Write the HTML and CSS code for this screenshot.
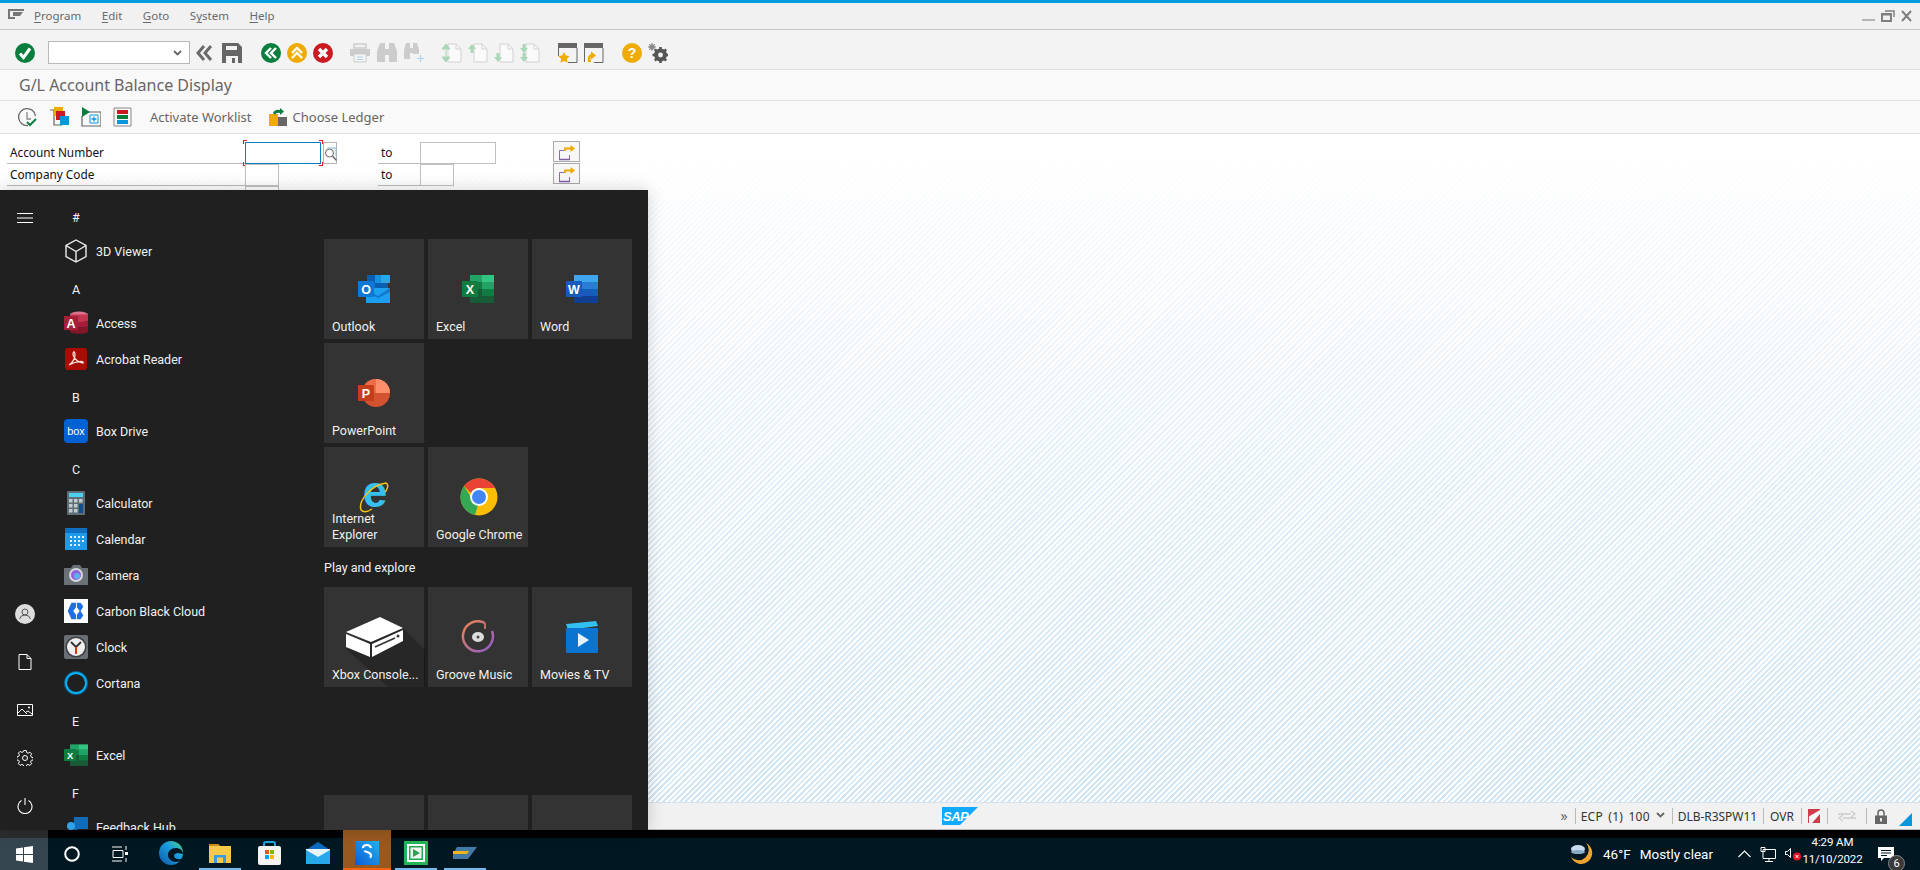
FILE: index.html
```html
<!DOCTYPE html>
<html lang="en">
<head>
<meta charset="utf-8">
<title>G/L Account Balance Display</title>
<link rel="stylesheet" href="styles.css">
</head>
<body>
<svg class="defs" width="0" height="0" aria-hidden="true">
  <defs>
    <symbol id="excel" viewBox="0 0 32 28">
      <rect x="8" y="0" width="24" height="28" rx="1" fill="#107c41"/>
      <rect x="20" y="0" width="12" height="7" fill="#33c481"/>
      <rect x="8" y="0" width="12" height="7" fill="#21a366"/>
      <rect x="20" y="7" width="12" height="7" fill="#21a366"/>
      <rect x="20" y="14" width="12" height="7" fill="#107c41"/>
      <rect x="8" y="14" width="12" height="7" fill="#185c37"/>
      <rect x="8" y="21" width="24" height="7" fill="#185c37"/>
      <rect x="0" y="6" width="16" height="16" rx="1" fill="#107c41"/>
      <text x="8" y="19" class="svg-letter">X</text>
    </symbol>
    <symbol id="pageup" viewBox="0 0 20 20">
      <path d="M6 1h8l5 5v13H6z" fill="#fafafa" stroke="#d2d2d2"/>
      <path d="M14 1v5h5" fill="none" stroke="#d2d2d2"/>
    </symbol>
    <symbol id="sapgoto" viewBox="0 0 18 18">
      <path d="M8 7.500H1.500v9h10V12" fill="none" stroke="#8b6bb1"/>
      <path d="M1 16.500h11" stroke="#7d5da8" stroke-width="1.500"/>
      <path d="M6 8V4.500h6.500V2L17 5.500 12.500 9V6.500H8V8z" fill="#f0ab00"/>
    </symbol>
  </defs>
</svg>
<div class="desktop">
  <main class="window">
    <div class="menubar">
      <svg class="menu-glyph" width="16" height="10" viewBox="0 0 16 10"><path d="M0 0h16v2H2v6h5v2H0z M5 3h10l-3 4H5z" fill="#777"/></svg>
      <nav class="menu-items">
        <span><u>P</u>rogram</span><span><u>E</u>dit</span><span><u>G</u>oto</span><span>S<u>y</u>stem</span><span><u>H</u>elp</span>
      </nav>
      <div class="win-controls">
        <svg width="13" height="12" viewBox="0 0 13 12"><rect x="0" y="9" width="13" height="2" fill="#b4b4b4"/></svg>
        <svg width="14" height="12" viewBox="0 0 14 12"><path d="M1 4h9v7H1z M1 4.500h9" fill="none" stroke="#808080" stroke-width="2"/><path d="M4 1h9v6" fill="none" stroke="#808080" stroke-width="1.500"/></svg>
        <svg width="11" height="12" viewBox="0 0 11 12"><path d="M1 1l9 10M10 1l-9 10" stroke="#808080" stroke-width="2"/></svg>
      </div>
    </div>

    <div class="toolbar">
      <div class="tb-group">
        <svg class="ic" viewBox="0 0 20 20"><circle cx="10" cy="10" r="10" fill="#0a7e3e"/><path d="M5 10.500l3.500 4L15 5.500" fill="none" stroke="#fff" stroke-width="3"/></svg>
      </div>
      <div class="combo">
        <svg width="9" height="6" viewBox="0 0 9 6"><path d="M1 1l3.500 3.500L8 1" fill="none" stroke="#666" stroke-width="1.800"/></svg>
      </div>
      <div class="tb-group nav-save">
        <svg class="ic narrow" viewBox="0 0 18 20"><path d="M9 3L3 10l6 7M16 3l-6 7 6 7" fill="none" stroke="#6b6b6b" stroke-width="3"/></svg>
        <svg class="ic" viewBox="0 0 20 20"><path d="M0 0h16l4 4v16H0z" fill="#666"/><rect x="4" y="3" width="11" height="4" fill="#f3f3f3"/><rect x="4" y="13" width="12" height="7" fill="#f3f3f3"/><rect x="10" y="15" width="3" height="5" fill="#666"/></svg>
      </div>
      <div class="tb-group wide">
        <svg class="ic" viewBox="0 0 20 20"><circle cx="10" cy="10" r="10" fill="#0a7e3e"/><path d="M10 5l-5 5 5 5M15 5l-5 5 5 5" fill="none" stroke="#fff" stroke-width="2.400"/></svg>
        <svg class="ic" viewBox="0 0 20 20"><circle cx="10" cy="10" r="10" fill="#f0ab00"/><path d="M5 10l5-5 5 5M5 15l5-5 5 5" fill="none" stroke="#fff" stroke-width="2.400"/></svg>
        <svg class="ic" viewBox="0 0 20 20"><circle cx="10" cy="10" r="10" fill="#cc1a22"/><path d="M6 6l8 8M14 6l-8 8" stroke="#fff" stroke-width="3.400"/></svg>
      </div>
      <div class="tb-group std">
        <svg class="ic" viewBox="0 0 20 20"><path d="M4 1h12v4H4z" fill="none" stroke="#ccc" stroke-width="1.500"/><path d="M0 6h20v7h-4v-2H4v2H0z" fill="#ccc"/><path d="M4 11h12v8H4z" fill="#f5f5f5" stroke="#ccc"/><path d="M7 14h6M7 16.500h6" stroke="#a9d5ec"/></svg>
        <svg class="ic" viewBox="0 0 20 20"><path d="M3 0h5v19H0V8zM12 0h5l3 8v11h-8z M8 6h4v6H8z" fill="#ccc"/></svg>
        <svg class="ic" viewBox="0 0 20 20"><path d="M2 0h4v16H0V7zM9 0h4l2 7v4H9z M6 5h3v5H6z" fill="#ccc"/><path d="M13 15.500h7M16.500 12v7" stroke="#a9d5ec" stroke-width="1.200"/></svg>
      </div>
      <div class="tb-group pages">
        <svg class="ic" viewBox="0 0 20 20"><use href="#pageup"/><path d="M4 1l4 5H0zM4 7v4M4 19l-4-5h8zM4 14v-3" fill="#a9d8b8" stroke="#a9d8b8" stroke-width="1"/></svg>
        <svg class="ic" viewBox="0 0 20 20"><use href="#pageup"/><path d="M4 1l4 5H0z M2.500 5h3v5h-3z" fill="#a9d8b8"/></svg>
        <svg class="ic" viewBox="0 0 20 20"><use href="#pageup"/><path d="M4 19l-4-5h8z M2.500 10h3v5h-3z" fill="#a9d8b8"/></svg>
        <svg class="ic" viewBox="0 0 20 20"><use href="#pageup"/><path d="M4 10L0 5h8zM2.500 1h3v5h-3zM4 19l-4-5h8zM2.500 10h3v5h-3z" fill="#a9d8b8"/></svg>
      </div>
      <div class="tb-group pages">
        <svg class="ic" viewBox="0 0 20 20"><path d="M0 0h19v5H0z" fill="#666"/><path d="M.5 5v8M19 5v14.500h-9" fill="none" stroke="#666"/><path d="M6 9l1.800 3.600 4 .5-3 2.700.8 4L6 18l-3.600 1.800.8-4-3-2.700 4-.5z" fill="#f0ab00"/></svg>
        <svg class="ic" viewBox="0 0 20 20"><path d="M0 0h19v5H0z" fill="#666"/><path d="M.5 5v14M19 5v14.500h-9" fill="none" stroke="#666"/><path d="M4 19q-1-7 3-8V8.500l5 4-5 4V14q-1 1 0 5z" fill="#f0ab00"/></svg>
      </div>
      <div class="tb-group pages">
        <svg class="ic" viewBox="0 0 20 20"><circle cx="10" cy="10" r="10" fill="#f0ab00"/><text x="10" y="15" class="svg-help">?</text></svg>
        <svg class="ic" viewBox="0 0 20 20"><circle cx="12.500" cy="12" r="5" fill="none" stroke="#555" stroke-width="3"/><path d="M12.500 4v16M4.500 12h16M6.800 6.300l11.400 11.400M18.200 6.300L6.800 17.700" stroke="#555" stroke-width="2.600"/><circle cx="12.500" cy="12" r="2.400" fill="#f3f3f3"/><circle cx="4" cy="4" r="2" fill="none" stroke="#888" stroke-width="1.500"/><path d="M4 0v8M0 4h8M1.200 1.200l5.600 5.600M6.800 1.200L1.200 6.800" stroke="#888"/></svg>
      </div>
    </div>

    <h1 class="titlebar">G/L Account Balance Display</h1>

    <div class="apptools">
      <svg class="ic" viewBox="0 0 20 20"><path d="M11 18.500A8.500 8.500 0 1 1 18.500 9" fill="none" stroke="#666" stroke-width="1.300"/><path d="M10 5v7h4" fill="none" stroke="#888" stroke-width="1.300"/><path d="M10 15l3 3 6-6" fill="none" stroke="#0a7e3e" stroke-width="2"/></svg>
      <svg class="ic" viewBox="0 0 20 20"><path d="M1 3h4v15h8" fill="none" stroke="#666" stroke-width="1.200"/><rect x="5" y="0" width="9" height="9" fill="#f0ab00"/><rect x="7" y="4" width="9" height="9" fill="#cc1a22"/><rect x="11" y="9" width="9" height="9" fill="#0a96dc"/></svg>
      <svg class="ic" viewBox="0 0 20 20"><path d="M6 5h14v14H1V9" fill="none" stroke="#666" stroke-width="1.200"/><path d="M1 0l8 5-8 5z" fill="#0a7e3e"/><path d="M9 8h8v8H9z" fill="#fff" stroke="#0a96dc"/><path d="M13 9.500v5M10.500 12h5" stroke="#0a96dc" stroke-width="1.300"/></svg>
      <svg class="ic" viewBox="0 0 20 20"><path d="M1 1h17v18H1z" fill="none" stroke="#888"/><rect x="4" y="3" width="11" height="4" fill="#cc1a22"/><rect x="4" y="8" width="11" height="4" fill="#0a7e3e"/><rect x="4" y="13" width="11" height="4" fill="#0a96dc"/></svg>
      <span class="tool-text worklist">Activate Worklist</span>
      <svg class="ic ledger" viewBox="0 0 18 18"><rect x="0" y="6" width="9" height="12" fill="#f0ab00"/><rect x="9" y="9" width="9" height="9" fill="#666"/><path d="M4 5q2-4 7-3V0l4 3.500-4 3.500V5q-4-1-5 2z" fill="#0a7e3e"/></svg>
      <span class="tool-text">Choose Ledger</span>
    </div>

    <section class="content">
      <div class="form-row">
        <span class="label">Account Number</span>
        <span class="field focus"><i class="corner tl"></i><i class="corner tr"></i><i class="corner bl"></i><i class="corner br"></i></span>
        <span class="search"><svg width="13" height="15" viewBox="0 0 13 15"><path d="M3 2h9v8" fill="none" stroke="#8fbad0"/><circle cx="5.500" cy="7" r="4" fill="none" stroke="#666"/><path d="M8.500 10l4 4.500" stroke="#666" stroke-width="1.400"/></svg></span>
        <span class="to">to</span>
        <span class="field"></span>
        <span class="multi"><svg width="18" height="18" viewBox="0 0 18 18"><use href="#sapgoto"/></svg></span>
      </div>
      <div class="form-row">
        <span class="label">Company Code</span>
        <span class="field short"></span>
        <span></span>
        <span class="to">to</span>
        <span class="field short"></span>
        <span class="multi"><svg width="18" height="18" viewBox="0 0 18 18"><use href="#sapgoto"/></svg></span>
      </div>
      <div class="form-row">
        <span class="label plain"></span>
        <span class="field short"></span>
      </div>
    </section>

    <footer class="statusbar">
      <span></span>
      <svg class="sap" width="36" height="18" viewBox="0 0 36 18"><path d="M0 0h36L18 18H0z" fill="#0faaff"/><text x="1" y="13.500" class="svg-sap">SAP</text></svg>
      <div class="status-right">
        <span class="more">»</span>
        <span class="st st-sys">ECP (1) 100<svg class="st-chevron" width="9" height="6" viewBox="0 0 9 6"><path d="M1 1l3.500 3.500L8 1" fill="none" stroke="#666" stroke-width="1.800"/></svg></span>
        <span class="st st-host">DLB-R3SPW11</span>
        <span class="st st-ovr">OVR</span>
        <span class="st st-ovr"><svg width="12" height="14" viewBox="0 0 12 14"><rect width="12" height="14" fill="#f8f8f8"/><path d="M0 0h12v1L0 8zM12 5v9H4z" fill="#d03a4a"/><path d="M.5 0v14" stroke="#d03a4a"/></svg></span>
        <span class="st st-xfer"><svg width="18" height="12" viewBox="0 0 18 12"><path d="M0 4h13M13 1l4 3-4 3M18 8H5M5 5L1 8l4 3" fill="none" stroke="#ccc" stroke-width="1.300"/></svg></span>
        <span class="st st-lock"><svg width="12" height="15" viewBox="0 0 12 15"><path d="M3 7V4a3 3 0 0 1 6 0v3" fill="none" stroke="#666" stroke-width="1.500"/><rect y="6.500" width="12" height="8.500" fill="#666"/><rect x="5" y="9" width="2" height="3.500" fill="#e8e8e8"/></svg></span>
        <svg class="resize" width="13" height="13" viewBox="0 0 13 13"><path d="M13 0v13H0z" fill="#0a96dc"/></svg>
      </div>
    </footer>
  </main>

  <aside class="startmenu">
    <div class="rail">
      <div class="rail-btn"><svg width="16" height="10" viewBox="0 0 16 10"><path d="M0 .5h16M0 5h16M0 9.500h16" stroke="#fff"/></svg></div>
      <div class="rail-bottom">
        <div class="rail-btn"><svg width="20" height="20" viewBox="0 0 20 20"><circle cx="10" cy="10" r="10" fill="#ddd"/><circle cx="10" cy="8" r="3" fill="none" stroke="#555"/><path d="M4.500 15q1-4 5.500-4t5.500 4" fill="none" stroke="#555"/></svg></div>
        <div class="rail-btn"><svg width="14" height="16" viewBox="0 0 14 16"><path d="M1 .5h8l4 4v11H1zM9 .5v4h4" fill="none" stroke="#fff"/></svg></div>
        <div class="rail-btn"><svg width="16" height="12" viewBox="0 0 16 12"><path d="M.5.500h15v11H.5z" fill="none" stroke="#fff"/><path d="M1 9l4-4 5 5M9 8l2-1 4 3" fill="none" stroke="#fff"/><circle cx="12" cy="3.500" r="1" fill="#fff"/></svg></div>
        <div class="rail-btn"><svg width="16" height="16" viewBox="0 0 16 16"><circle cx="8" cy="8" r="2.500" fill="none" stroke="#fff"/><path d="M6.800.5h2.400l.4 2 1.500.7 1.800-1 1.700 1.700-1 1.800.7 1.500 2 .4v2.400l-2 .4-.7 1.500 1 1.800-1.700 1.700-1.800-1-1.500.7-.4 2H6.800l-.4-2-1.500-.7-1.800 1-1.700-1.700 1-1.800-.7-1.500-2-.4V6.800l2-.4.7-1.500-1-1.800 1.700-1.700 1.800 1 1.500-.7z" fill="none" stroke="#fff"/></svg></div>
        <div class="rail-btn"><svg width="16" height="16" viewBox="0 0 16 16"><path d="M4.500 2.500a7 7 0 1 0 7 0M8 0v7" fill="none" stroke="#fff" stroke-width="1.100"/></svg></div>
      </div>
    </div>

    <div class="applist">
      <div class="letter">#</div>
      <div class="app"><svg class="app-ic" viewBox="0 0 24 24"><path d="M12 1l10 5.500v11L12 23 2 17.500v-11zM2 6.500l10 6 10-6M12 12.500V23" fill="none" stroke="#eee" stroke-width="1.400"/></svg>3D Viewer</div>
      <div class="letter">A</div>
      <div class="app"><svg class="app-ic" viewBox="0 0 24 24"><ellipse cx="15" cy="3.500" rx="9" ry="3" fill="#d9758c"/><path d="M6 3.500h18v6c0 2-18 2-18 0z" fill="#c4364f"/><path d="M6 9.500c0 2 18 2 18 0v5.500c0 2-18 2-18 0z" fill="#a61c38"/><path d="M6 15c0 2 18 2 18 0v5.500c0 3-18 3-18 0z" fill="#841529"/><rect y="5" width="14" height="14" fill="#a4203a"/><text x="7" y="16.500" class="svg-letter">A</text></svg>Access</div>
      <div class="app"><svg class="app-ic" viewBox="0 0 24 24"><rect x="1" y="1" width="22" height="22" rx="3" fill="#aa0d00"/><path d="M5 18q4-2 6-9 0-4-1-4t-1 3q3 7 10 8 1-1-2-1.500-6 0-12 3.500z" fill="none" stroke="#f7d9d5" stroke-width="1.300"/></svg>Acrobat Reader</div>
      <div class="letter">B</div>
      <div class="app"><svg class="app-ic" viewBox="0 0 24 24"><rect width="24" height="24" rx="4" fill="#0061d5"/><text x="12" y="15.500" class="svg-box">box</text></svg>Box Drive</div>
      <div class="letter">C</div>
      <div class="app"><svg class="app-ic" viewBox="0 0 24 24"><rect x="3" width="18" height="24" rx="1" fill="#5f6d76"/><rect x="5" y="2" width="14" height="4" fill="#4ad0f0"/><path d="M5 8h3.500v3.500H5zM10 8h3.500v3.500H10zM15 8h3.500v3.500H15zM5 13h3.500v3.500H5zM10 13h3.500v3.500H10zM5 18h3.500v3.500H5zM10 18h3.500v3.500H10z" fill="#c2cbd0"/><rect x="15" y="13" width="4" height="9" fill="#134f8e"/></svg>Calculator</div>
      <div class="app"><svg class="app-ic" viewBox="0 0 24 24"><rect x="1" y="1" width="22" height="22" fill="#1e9ae8"/><rect x="1" y="1" width="22" height="5" fill="#0f6fc0"/><path d="M6 9h2v2H6zM10 9h2v2h-2zM14 9h2v2h-2zM18 9h2v2h-2zM6 13h2v2H6zM10 13h2v2h-2zM14 13h2v2h-2zM18 13h2v2h-2zM6 17h2v2H6zM10 17h2v2h-2zM14 17h2v2h-2z" fill="#dff1fc"/></svg>Calendar</div>
      <div class="app"><svg class="app-ic" viewBox="0 0 24 24"><path d="M0 5h7l2-3h7l2 3h6v17H0z" fill="#6a7077"/><circle cx="12" cy="12" r="7" fill="#d6d9db"/><circle cx="12" cy="12" r="5" fill="#8f63dd"/><circle cx="13" cy="13" r="3" fill="#5fb0f0"/></svg>Camera</div>
      <div class="app"><span class="cb-tile"><svg class="cb-ic" viewBox="0 0 24 24"><path d="M3 12l4-9h5v5l-3 4 3 4v5H7z M13 3h4l3 4-3 5 3 5-3 4h-4v-5l3-4-3-4z" fill="#1f6fe0"/></svg></span>Carbon Black Cloud</div>
      <div class="app"><svg class="app-ic" viewBox="0 0 24 24"><rect width="24" height="24" rx="2" fill="#6a6f75"/><circle cx="12" cy="12" r="10.500" fill="#3d3f42"/><circle cx="12" cy="12" r="9" fill="#eee"/><path d="M12 12L7 7M12 12l5-5" stroke="#333" stroke-width="1.800"/><path d="M12 12v7" stroke="#d83b01" stroke-width="2"/></svg>Clock</div>
      <div class="app"><svg class="app-ic" viewBox="0 0 24 24"><circle cx="12" cy="12" r="10.500" fill="none" stroke="#0a5f8e" stroke-width="3"/><circle cx="12" cy="12" r="10" fill="none" stroke="#0cb0f2" stroke-width="1.800"/></svg>Cortana</div>
      <div class="letter">E</div>
      <div class="app"><svg class="app-ic"><use href="#excel"/></svg>Excel</div>
      <div class="letter">F</div>
      <div class="app"><svg class="app-ic" viewBox="0 0 24 24"><path d="M10 2h14v12H14l-4 4z" fill="#0f6cbd"/><circle cx="7" cy="11" r="4" fill="#2fa3e6"/></svg>Feedback Hub</div>
    </div>

    <div class="tiles">
      <div class="tile"><svg class="t-ic" width="32" height="28" viewBox="0 0 32 28"><rect x="9" width="21" height="16" fill="#0a5eb0"/><rect x="17" width="6.500" height="8" fill="#1490df"/><rect x="23" width="9" height="8" fill="#28a8ea"/><rect x="9" y="8" width="8" height="8" fill="#0f78d4"/><path d="M8 13h24v15H8z" fill="#1ba0ef"/><path d="M8 13l12 8 12-8v4l-12 6-12-6z" fill="#0f78d4"/><rect y="6" width="16" height="16" rx="1" fill="#0f78d4"/><text x="8" y="19" class="svg-letter">O</text></svg><span class="t-label">Outlook</span></div>
      <div class="tile"><svg class="t-ic" width="32" height="28"><use href="#excel"/></svg><span class="t-label">Excel</span></div>
      <div class="tile"><svg class="t-ic" width="32" height="28" viewBox="0 0 32 28"><rect x="8" width="24" height="28" rx="1" fill="#185abd"/><rect x="8" width="24" height="7" fill="#41a5ee"/><rect x="8" y="7" width="24" height="7" fill="#2b7cd3"/><rect x="8" y="21" width="24" height="7" fill="#103f91"/><rect y="6" width="16" height="16" rx="1" fill="#185abd"/><text x="8" y="19" class="svg-letter">W</text></svg><span class="t-label">Word</span></div>

      <div class="tile"><svg class="t-ic" width="32" height="28" viewBox="0 0 32 28"><circle cx="18" cy="14" r="14" fill="#d35230"/><path d="M18 0a14 14 0 0 1 14 14H18z" fill="#ff8f6b"/><path d="M18 0a14 14 0 0 0-14 14h14z" fill="#ed6c47"/><rect y="6" width="16" height="16" rx="1" fill="#c43e1c"/><text x="8" y="19" class="svg-letter">P</text></svg><span class="t-label">PowerPoint</span></div>
      <div class="tile blank"></div>
      <div class="tile blank"></div>

      <div class="tile"><svg class="t-ic ie" width="30" height="30" viewBox="0 0 30 30"><text x="16" y="25" class="svg-ie">e</text><path d="M2 28C-1 19 12 3 27 1c4 2 0 8-1 9M2 28c3 3 8 1 11-1" fill="none" stroke="#f0c419" stroke-width="1.500"/></svg><span class="t-label">Internet<br>Explorer</span></div>
      <div class="tile"><svg class="t-ic" width="38" height="38" viewBox="0 0 38 38"><circle cx="19" cy="19" r="18.500" fill="#fbbc04"/><path d="M19 .5A18.500 18.500 0 0 1 35 10H19a9 9 0 0 0-8 5L4 8A18.500 18.500 0 0 1 19 .5z" fill="#ea4335"/><path d="M4 8l8 13a8 8 0 0 0 6 6l-3 10A18.500 18.500 0 0 1 4 8z" fill="#34a853"/><circle cx="19" cy="19" r="9" fill="#fff"/><circle cx="19" cy="19" r="7" fill="#4285f4"/></svg><span class="t-label">Google Chrome</span></div>
      <div class="tile blank"></div>

      <div class="group-title">Play and explore</div>

      <div class="tile"><svg class="t-ic" width="100" height="100" viewBox="0 0 100 100"><path d="M78 41l22 22v37H63L21 62z" fill="#000" opacity=".22"/><path d="M21 45l34-15 23 11-32 14z" fill="#fff"/><path d="M21 47l24 10v13L21 60z" fill="#fff"/><path d="M47 57l31-14v11L47 70z" fill="#fff"/><path d="M50 60l20-9" stroke="#333" stroke-width="1.500"/><circle cx="73" cy="49" r="1.500" fill="#333"/></svg><span class="t-label">Xbox Console...</span></div>
      <div class="tile"><svg class="t-ic" width="34" height="34" viewBox="0 0 34 34"><defs><linearGradient id="groove" x1="0" y1="0" x2="1" y2="1"><stop offset="0" stop-color="#e8844a"/><stop offset="1" stop-color="#8e5cd0"/></linearGradient></defs><path d="M24 3A15 15 0 1 0 31 11" fill="none" stroke="url(#groove)" stroke-width="2.500"/><path d="M24 3v6" stroke="#c86a60" stroke-width="2"/><ellipse cx="17" cy="17" rx="6" ry="5" fill="#ddd"/><circle cx="17" cy="17" r="1.500" fill="#444"/></svg><span class="t-label">Groove Music</span></div>
      <div class="tile"><svg class="t-ic" width="32" height="32" viewBox="0 0 32 32"><path d="M0 3l30-3 2 5L2 9z" fill="#31c0ef"/><rect y="7" width="32" height="25" rx="1" fill="#0a74d0"/><path d="M12 12l11 7-11 7z" fill="#eaf3fb"/></svg><span class="t-label">Movies &amp; TV</span></div>

      <div class="spacer"></div>

      <div class="tile"></div>
      <div class="tile"></div>
      <div class="tile"></div>
    </div>
  </aside>

  <div class="taskbar">
    <div class="start"><svg width="17" height="17" viewBox="0 0 17 17"><path d="M0 2.500l7-1V8H0zM8 1.300L17 0v8H8zM0 9h7v6.500l-7-1zM8 9h9v8l-9-1.300z" fill="#fff"/></svg></div>
    <div class="tb-slot"><svg width="16" height="16" viewBox="0 0 16 16"><circle cx="8" cy="8" r="6.800" fill="none" stroke="#fff" stroke-width="2"/></svg></div>
    <div class="tb-slot"><svg width="17" height="16" viewBox="0 0 17 16"><path d="M1 4.500h10v7H1zM0 1h10M0 15h10M14 0v4M14 12v4" fill="none" stroke="#fff"/><rect x="13" y="6" width="3" height="3" fill="#fff"/></svg></div>
    <div class="apps">
      <div class="tk-app"><svg width="24" height="24" viewBox="0 0 24 24"><defs><linearGradient id="edge" x1="0" y1="1" x2="1" y2="0"><stop offset="0" stop-color="#0c59a4"/><stop offset=".6" stop-color="#1b9de2"/><stop offset="1" stop-color="#54d576"/></linearGradient></defs><circle cx="12" cy="12" r="12" fill="url(#edge)"/><path d="M24 13c0-4-4-6-7-6-5 0-8 3-8 7s4 7 8 7 6-2 7-4c-3 2-8 2-9-2 0-2 2-3 4-3 2 0 4 1 5 1z" fill="#001722"/></svg></div>
      <div class="tk-app running"><svg width="22" height="20" viewBox="0 0 22 20"><path d="M0 1h9l2 2h11v17H0z" fill="#f7c948"/><path d="M0 1h9l2 2H0z" fill="#c98d1a"/><rect x="5" y="12" width="12" height="8" fill="#3a9be0"/><rect x="8" y="14.500" width="6" height="5.500" fill="#f7c948"/></svg></div>
      <div class="tk-app"><svg width="23" height="24" viewBox="0 0 23 24"><path d="M6 6V3q0-2 2-2h7q2 0 2 2v3" fill="none" stroke="#1fa6dc" stroke-width="2"/><rect y="5" width="23" height="19" rx="2" fill="#f4f4f4"/><rect x="7" y="9" width="4" height="4" fill="#f25022"/><rect x="12" y="9" width="4" height="4" fill="#7fba00"/><rect x="7" y="14" width="4" height="4" fill="#00a4ef"/><rect x="12" y="14" width="4" height="4" fill="#ffb900"/></svg></div>
      <div class="tk-app"><svg width="24" height="22" viewBox="0 0 24 22"><path d="M0 8l12-8 12 8z" fill="#0a6cc0"/><rect y="8" width="24" height="14" fill="#28a8ea"/><path d="M0 8l12 7 12-7v-1H0z" fill="#e8f4fc"/></svg></div>
      <div class="tk-app active"><svg width="24" height="24" viewBox="0 0 24 24"><defs><linearGradient id="sapp" x1="0" y1="1" x2="1" y2="0"><stop offset="0" stop-color="#0a5bd8"/><stop offset="1" stop-color="#22b4ec"/></linearGradient></defs><rect width="24" height="24" fill="url(#sapp)"/><path d="M16 7q-1-3-4-3-4 0-4 3t4 4 4 3.500-4 3.500-4-3" fill="none" stroke="#fff" stroke-width="2.200" stroke-dasharray="11 3 11"/></svg></div>
      <div class="tk-app running"><svg width="24" height="24" viewBox="0 0 24 24"><rect width="24" height="24" fill="#23b55a"/><rect x="3" y="3" width="18" height="18" fill="#fff"/><rect x="5" y="5" width="14" height="14" fill="#23a757"/><rect x="6.500" y="6.500" width="11" height="11" fill="#eef8f1"/><path d="M9 8l7 4-7 4z" fill="#23a757"/></svg></div>
      <div class="tk-app running"><svg width="24" height="12" viewBox="0 0 24 12"><path d="M4 0h20l-9 12H0v-5z" fill="#447aa6"/><path d="M0 4h16l-2 3H0z" fill="#f2b418"/></svg></div>
    </div>
    <div class="tray">
      <svg class="weather" width="24" height="24" viewBox="0 0 24 24"><path d="M16 1a11 11 0 1 1-15 14 9 9 0 0 0 15-14z" fill="#f0a32e"/><ellipse cx="8" cy="7" rx="7" ry="4" fill="#c9dbee"/><ellipse cx="8" cy="10" rx="7" ry="2" fill="#8aa9c8"/></svg>
      <span class="temp">46°F</span>
      <span class="cond">Mostly clear</span>
      <svg class="chev" width="13" height="8" viewBox="0 0 13 8"><path d="M.5 7l6-6 6 6" fill="none" stroke="#fff" stroke-width="1.100"/></svg>
      <svg class="tray-ic" width="16" height="15" viewBox="0 0 16 15"><path d="M3 2.500h12.500v9H3zM1 .5h4v4H1zM9 11.500v3M5 14.500h8" fill="#001722" stroke="#fff"/></svg>
      <svg class="tray-ic" width="17" height="14" viewBox="0 0 17 14"><path d="M.5 4.500h2l3-3v9l-3-3h-2z" fill="none" stroke="#fff"/><circle cx="12" cy="9.500" r="4" fill="#e81123"/><path d="M10.500 8l3 3M13.500 8l-3 3" stroke="#fff"/></svg>
      <div class="clock"><span>4:29 AM</span><span>11/10/2022</span></div>
      <div class="notify">
        <svg width="16" height="14" viewBox="0 0 16 14"><path d="M0 0h16v11H6l-3 3v-3H0z" fill="#fff"/><path d="M3 3.500h10M3 6h10M3 8.500h6" stroke="#001722"/></svg>
        <span class="badge">6</span>
      </div>
    </div>
  </div>
</div>
</body>
</html>
```

FILE: styles.css
```css
* { box-sizing: border-box; }
html, body { margin: 0; height: 100%; overflow: hidden; }
body { font-family: "Noto Sans", "Open Sans", sans-serif; font-size: 12px; color: #333; }
.defs { position: absolute; }
svg { display: block; flex: none; }

.svg-letter { font: 700 12.500px "Liberation Sans", sans-serif; fill: #fff; text-anchor: middle; }
.svg-help { font: 700 14px "Liberation Sans", sans-serif; fill: #fff; text-anchor: middle; }
.svg-sap { font: italic 700 13px "Liberation Sans", sans-serif; fill: #fff; letter-spacing: -.5px; }
.svg-box { font: 400 11px "Liberation Sans", sans-serif; fill: #fff; text-anchor: middle; }
.svg-ie { font: 700 44px "Liberation Sans", sans-serif; fill: #36c0f0; text-anchor: middle; }
.ie { overflow: visible; }

.desktop { position: relative; width: 1920px; height: 870px; display: flex; flex-direction: column; overflow: hidden; }
.window { flex: 1; min-height: 0; display: flex; flex-direction: column; border-top: 3px solid #009de0; background: #fff; }

.menubar { height: 27px; flex: none; display: flex; align-items: center; background: #f1f1f1; border-bottom: 1px solid #c6c6c6; color: #6a6a6a; padding: 0 8px; }
.menu-glyph { margin-top: -5px; }
.menu-items { display: flex; gap: 20.500px; margin-left: 10px; margin-top: -1px; font-size: 11.500px; }
.menu-items u { text-underline-offset: 2px; }
.win-controls { margin-left: auto; display: flex; gap: 6px; align-items: flex-start; }

.toolbar { height: 40px; flex: none; display: flex; align-items: center; background: #f3f3f3; border-bottom: 1px solid #dedede; padding: 6px 0 0 15px; }
.tb-group { display: flex; gap: 6px; align-items: center; }
.ic { width: 20px; height: 20px; }
.ic.narrow { width: 18px; }
.combo { width: 142px; height: 23px; margin-left: 13px; background: #fff; border: 1px solid #b8b8b8; display: flex; align-items: center; justify-content: flex-end; padding-right: 7px; }
.nav-save { margin-left: 5px; gap: 9px; }
.wide { margin-left: 19px; }
.std { margin-left: 17px; gap: 7px; }
.pages { margin-left: 18px; }

.titlebar { height: 31px; flex: none; margin: 0; padding: 0 0 0 19px; display: flex; align-items: center; font-size: 16px; font-weight: 400; color: #666; background: #f9f9f9; border-bottom: 1px solid #e0e0e0; }

.apptools { height: 33px; flex: none; display: flex; align-items: center; padding-left: 17px; gap: 12px; background: #f9f9f9; border-bottom: 1px solid #e0e0e0; color: #666; }
.tool-text { font-size: 13px; }
.worklist { margin-left: 5px; }
.ledger { width: 18px; height: 18px; margin-left: 5px; margin-right: -6px; }

.content { flex: 1; min-height: 0; padding: 8px 0 0 7px; display: flex; flex-direction: column; gap: 2px; background:
  linear-gradient(rgba(255,255,255,1) 20px, rgba(255,255,255,.9) 60px, rgba(255,255,255,.5) 300px, rgba(255,255,255,.08) 100%),
  repeating-linear-gradient(135deg, #cde3f3 0 2px, #fff 2px 4px); }
.form-row { height: 20px; display: grid; grid-template-columns: 238px 76px 2px 14px 41px 42px 76px 57px 27px; align-items: stretch; color: #111; }
.form-row > :nth-child(3) { grid-column: 3 / span 2; }
.form-row > .search { grid-column: 4; }
.form-row > .to { grid-column: 6; }
.form-row > .to + .field { grid-column: 7; }
.form-row > .multi { grid-column: 9; }
.label { border-bottom: 1px solid #bbb; padding-left: 3px; line-height: 21px; font-size: 11.800px; }
.label.plain { border: 0; }
.to { border-bottom: 1px solid #bbb; padding-left: 3px; line-height: 21px; font-size: 11.800px; }
.field { position: relative; background: #fff; border: 1px solid #c0c0c0; }
.field.short { width: 34px; }
.field.focus { border-color: #0a7fc0; }
.corner { position: absolute; width: 4px; height: 4px; border: 0 solid #d81e1e; }
.corner.tl { left: -3px; top: -3px; border-width: 1.500px 0 0 1.500px; }
.corner.tr { right: -3px; top: -3px; border-width: 1.500px 1.500px 0 0; }
.corner.bl { left: -3px; bottom: -3px; border-width: 0 0 1.500px 1.500px; }
.corner.br { right: -3px; bottom: -3px; border-width: 0 1.500px 1.500px 0; }
.search { border: 1px solid #b4b4b4; display: flex; align-items: center; justify-content: center; background: #fff; }
.multi { height: 21px; margin-top: -1px; border: 1px solid #aaa; background: #f7f7f7; display: flex; align-items: center; justify-content: center; }

.statusbar { height: 28px; flex: none; display: grid; grid-template-columns: 1fr auto 1fr; align-items: center; background: #f1f1f1; border-top: 1px solid #d6e2ec; border-bottom: 1px solid #bdbdbd; color: #333; }
.status-right { display: flex; align-items: center; justify-content: flex-end; padding-right: 8px; }
.more { font-size: 14px; color: #666; margin-right: 7px; line-height: 1; }
.st { display: flex; align-items: center; height: 16px; border-left: 1px solid #bbb; }
.st-sys { padding: 0 7px 0 5px; word-spacing: 2px; letter-spacing: .25px; }
.st-chevron { margin: 0 0 2px 6px; }
.st-host { padding: 0 6px 0 5px; letter-spacing: -.05px; }
.st-ovr { padding: 0 7px 0 6px; }
.st-xfer { padding: 0 10px; }
.st-lock { padding: 0 12px 0 8px; }
.resize { margin-top: 6px; }

.startmenu { position: absolute; left: 0; top: 190px; width: 648px; height: 640px; display: flex; background: #202020; color: #f0f0f0; overflow: hidden; box-shadow: 0 0 16px rgba(0,0,0,.18); font-family: Roboto, "Noto Sans", sans-serif; }
.rail { width: 50px; flex: none; display: flex; flex-direction: column; justify-content: space-between; padding-top: 4px; }
.rail-btn { height: 48px; display: flex; align-items: center; justify-content: center; }
.applist { width: 274px; flex: none; padding: 7px 0 0 14px; }
.letter { height: 36px; padding: 5px 0 0 8px; display: flex; align-items: center; font-size: 12.500px; color: #f0f0f0; }
.app { height: 36px; display: flex; align-items: center; gap: 8px; font-size: 12.500px; }
.app-ic { width: 24px; height: 24px; }
.cb-tile { width: 24px; height: 24px; flex: none; background: #fff; display: flex; align-items: center; justify-content: center; }
.cb-ic { width: 22px; height: 22px; }

.tiles { flex: none; padding-top: 49px; display: grid; grid-template-columns: repeat(3, 100px); grid-template-rows: repeat(3, 100px) 32px; grid-auto-rows: 100px; gap: 4px; align-content: start; }
.tile { display: grid; background: #333; }
.tile > * { grid-area: 1 / 1; }
.tile.blank { background: transparent; }
.t-ic { place-self: center; }
.t-label { align-self: end; padding: 0 8px 4px; font-size: 12.500px; line-height: 16px; color: #f0f0f0; white-space: nowrap; }
.group-title { grid-column: 1 / -1; display: flex; align-items: center; font-size: 12.500px; color: #f0f0f0; }
.spacer { grid-column: 1 / -1; }

.taskbar { height: 40px; flex: none; display: flex; align-items: stretch; background: linear-gradient(#000 8px, #011722 8px); color: #fff; font-family: Roboto, "Noto Sans", sans-serif; }
.start { width: 48px; padding-top: 8px; display: flex; align-items: center; justify-content: center; background: linear-gradient(#2c2c2c 8px, #354650 8px); }
.tb-slot { width: 48px; padding-top: 8px; display: flex; align-items: center; justify-content: center; }
.apps { display: flex; gap: 1px; margin-left: 3px; }
.tk-app { width: 48px; padding-top: 8px; display: flex; align-items: center; justify-content: center; border-bottom: 2px solid transparent; }
.tk-app.running { border-image: linear-gradient(90deg, transparent 4px, #76b9ed 4px, #76b9ed 44px, transparent 44px) 1; }
.tk-app.active { background: #98591f; border-bottom-color: #f7630c; }

.tray { margin-left: auto; padding-top: 8px; display: flex; align-items: center; font-size: 13.500px; }
.weather { margin-right: 9px; }
.cond { margin-left: 9px; margin-right: 25px; }
.tray-ic { margin-left: 9px; }
.clock { width: 67px; margin: -6px 0 0 -3px; display: flex; flex-direction: column; align-items: center; font-size: 11.500px; letter-spacing: -.1px; line-height: 17px; }
.notify { position: relative; width: 24px; margin: 0 18px 0 12px; }
.badge { position: absolute; right: -3px; bottom: -11px; width: 17px; height: 17px; border-radius: 50%; background: #3a3a3a; border: 1px solid #888; display: flex; align-items: center; justify-content: center; font-size: 11px; }
```
